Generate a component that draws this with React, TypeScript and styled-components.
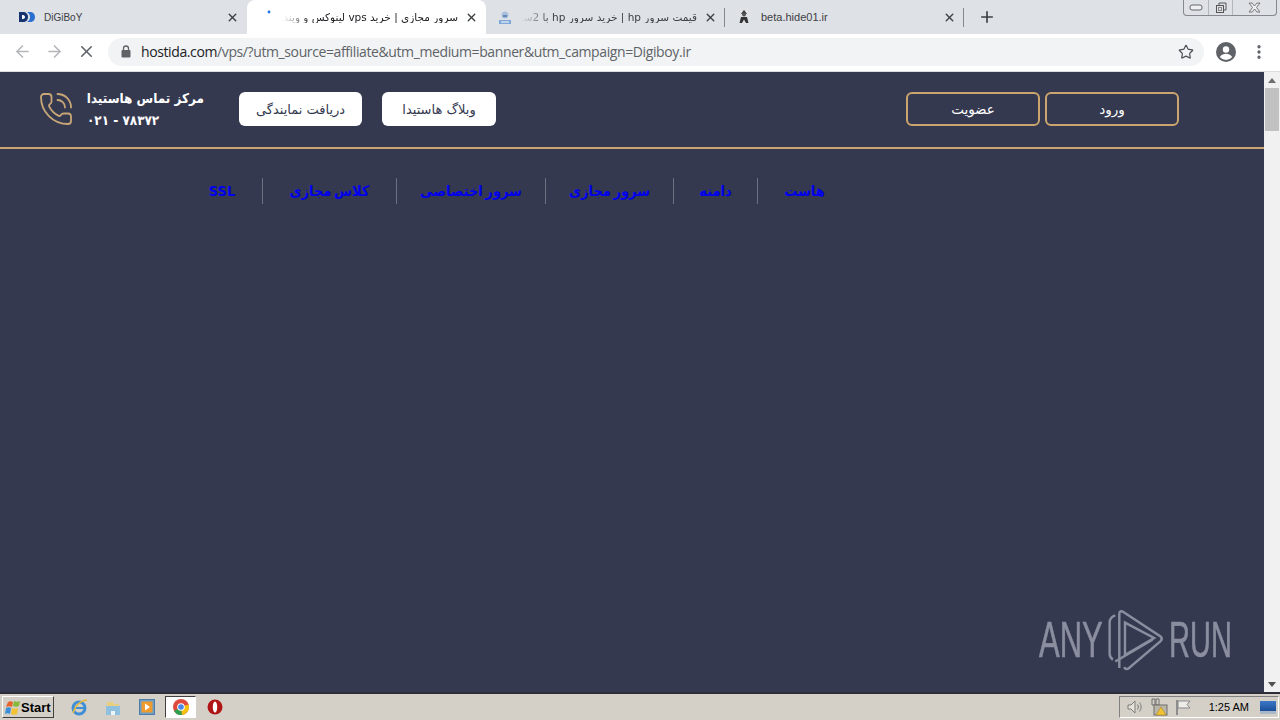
import styled, { createGlobalStyle } from "styled-components";
import { ArrowLeft, ArrowRight, MoreVertical, PhoneCall, Plus, Star, X } from "lucide-react";

const GlobalStyle = createGlobalStyle`
  html, body {
    margin: 0;
    padding: 0;
    overflow: hidden;
  }
  * {
    box-sizing: border-box;
  }
`;

const navItems = [
  { label: "هاست", width: 94 },
  { label: "دامنه", width: 84 },
  { label: "سرور مجازی", width: 128 },
  { label: "سرور اختصاصی", width: 149 },
  { label: "کلاس مجازی", width: 134 },
  { label: "SSL", width: 80 },
];

export default function App() {
  return (
    <StWindow>
      <GlobalStyle />
      <StTabStrip>
        <StTab>
          <StFavicon viewBox="0 0 16 16">
            <path d="M0 3h4c3 0 5 2 5 5s-2 5-5 5H0z" fill="#16346f" />
            <path d="M3 6h1c1 0 2 1 2 2s-1 2-2 2H3z" fill="#ffffff" />
            <path d="M8 3h3c3 0 5 2 5 5s-2 5-5 5H8c2-1 3-3 3-5s-1-4-3-5z" fill="#2a6fd0" />
          </StFavicon>
          <StBrandTitle>DiGiBoY</StBrandTitle>
          <StClose size={13} strokeWidth={2.6} />
        </StTab>
        <StActiveTab>
          <StFavicon viewBox="0 0 16 16">
            <circle cx="11" cy="3" r="1.400" fill="#1a73e8" />
          </StFavicon>
          <StRtlTitle>سرور مجازی | خرید vps لینوکس و ویندوز</StRtlTitle>
          <StClose size={13} strokeWidth={2.6} />
        </StActiveTab>
        <StTab $divider>
          <StFavicon viewBox="0 0 16 16">
            <circle cx="8" cy="6" r="3.500" fill="#a9bfdc" />
            <path d="M6 6h4v2H6z" fill="#5f86b8" />
            <path d="M2 11h12v4H2z" fill="#7fa8d8" />
            <path d="M4 13h8" stroke="#ffffff" />
          </StFavicon>
          <StRtlTitle>قیمت سرور hp | خرید سرور hp با 2سال گارانتی</StRtlTitle>
          <StClose size={13} strokeWidth={2.6} />
        </StTab>
        <StTab $divider>
          <StFavicon viewBox="0 0 16 16">
            <path d="M5 5l3-4 3 4z" fill="#333333" />
            <circle cx="8" cy="5.500" r="2" fill="#555555" />
            <path d="M3.500 14l1.500-6h6l1.500 6h-2.500L8 10.500 6 14z" fill="#333333" />
          </StFavicon>
          <StLtrTitle>beta.hide01.ir</StLtrTitle>
          <StClose size={13} strokeWidth={2.6} />
        </StTab>
        <StNewTab>
          <Plus size={18} strokeWidth={2.2} />
        </StNewTab>
        <StWindowControls>
          <StControl $width={25}>
            <svg width="14" height="7" viewBox="0 0 14 7">
              <rect x="1" y="1" width="12" height="5" rx="2" fill="#eef0f3" stroke="#666" />
            </svg>
          </StControl>
          <StControl $width={24}>
            <svg width="12" height="12" viewBox="0 0 12 12">
              <path d="M4 3V1h7v7H9" fill="none" stroke="#555" />
              <rect x="1.500" y="3.500" width="7" height="7" fill="none" stroke="#555" />
              <rect x="3.500" y="5.500" width="3" height="3" fill="none" stroke="#888" />
            </svg>
          </StControl>
          <StControl $width={43}>
            <svg width="13" height="11" viewBox="0 0 13 11">
              <path d="M1 1h3l2.500 3L9 1h3L8.500 5.500 12 10H9L6.500 7 4 10H1l3.500-4.500z" fill="#eef0f3" stroke="#777" />
            </svg>
          </StControl>
        </StWindowControls>
      </StTabStrip>

      <StToolbar>
        <StNavButton $muted>
          <ArrowLeft size={19} strokeWidth={2} />
        </StNavButton>
        <StNavButton $muted>
          <ArrowRight size={19} strokeWidth={2} />
        </StNavButton>
        <StNavButton>
          <X size={19} strokeWidth={2} />
        </StNavButton>
        <StOmnibox>
          <svg width="10" height="13" viewBox="0 0 10 13">
            <path d="M2.500 5V3.500a2.500 2.500 0 0 1 5 0V5" fill="none" stroke="#5f6368" strokeWidth="1.300" />
            <rect x="0.500" y="5" width="9" height="7.500" rx="1" fill="#5f6368" />
          </svg>
          <StUrl>
            hostida.com<span>/vps/?utm_source=affiliate&amp;utm_medium=banner&amp;utm_campaign=Digiboy.ir</span>
          </StUrl>
          <StStar size={16} strokeWidth={1.8} />
        </StOmnibox>
        <StAvatar viewBox="0 0 20 20">
          <circle cx="10" cy="10" r="10" fill="#5f6368" />
          <circle cx="10" cy="7.500" r="3.200" fill="#fff" />
          <path d="M3.800 15c1.400-2.400 4-3.300 6.200-3.300s4.800.9 6.200 3.300a8 8 0 0 1-12.400 0z" fill="#fff" />
        </StAvatar>
        <StMenuIcon size={18} strokeWidth={2.4} />
      </StToolbar>

      <StViewport>
        <StPage>
          <StHeader>
            <StContact>
              <StPhone size={36} strokeWidth={1.2} />
              <StContactText>
                <strong>مرکز تماس هاستیدا</strong>
                <span>۰۲۱ - ۷۸۳۷۲</span>
              </StContactText>
            </StContact>
            <StWhiteButton $width={123}>دریافت نمایندگی</StWhiteButton>
            <StWhiteButton $width={114}>وبلاگ هاستیدا</StWhiteButton>
            <StAccount>
              <StOutlineButton>عضویت</StOutlineButton>
              <StOutlineButton>ورود</StOutlineButton>
            </StAccount>
          </StHeader>
          <StNav>
            {navItems.map((item, index) => (
              <StNavLink key={item.label} href="#" $width={item.width} $last={index === navItems.length - 1}>
                {item.label}
              </StNavLink>
            ))}
          </StNav>
          <StWatermark>
            <StMarkText $width={63} $scale={0.62}>ANY</StMarkText>
            <svg width="55" height="62" viewBox="0 0 68 75" fill="none" stroke="#8b8e9f" strokeWidth="3">
              <path d="M9 7C3 9 2 12 2 16v38c0 4 1 6 4 8" />
              <path d="M14 72V5c0-3 2-4 5-2l46 30c2 2 2 4 0 6L25 73c-2 1-4 0-5-2" />
              <path d="M21 16v40l36-21z" />
              <path d="M9 64l46-27" />
            </svg>
            <StMarkText $width={61} $scale={0.58}>RUN</StMarkText>
          </StWatermark>
        </StPage>
        <StScrollbar>
          <StArrowUp />
          <StThumb />
          <StArrowDown />
        </StScrollbar>
      </StViewport>

      <StTaskbar>
        <StStart>
          <svg width="16" height="15" viewBox="0 0 16 15">
            <path d="M3 2c2-1 3-1 5 0L7 7C5 6 4 6 1 7z" fill="#e8622a" />
            <path d="M9 1c2 1 4 1 6 0l-1 5c-2 1-4 1-6 0z" fill="#86b93c" />
            <path d="M1 8c2-1 4-1 5 0l-1 6c-2-1-3-1-5 0z" fill="#3a8fd8" />
            <path d="M7 8c2 1 4 1 6 0l-1 6c-2 1-4 1-6 0z" fill="#f2c230" />
          </svg>
          Start
        </StStart>
        <StQuickLaunch>
          <StTaskIcon>
            <svg width="18" height="18" viewBox="0 0 18 18">
              <circle cx="9" cy="10" r="6" fill="none" stroke="#3f8fd6" strokeWidth="3" />
              <path d="M4 10h10" stroke="#3f8fd6" strokeWidth="2" />
              <path d="M3 15C6 6 12 2 17 2" fill="none" stroke="#e5b93c" strokeWidth="1.500" />
            </svg>
          </StTaskIcon>
          <StTaskIcon>
            <svg width="16" height="17" viewBox="0 0 16 17">
              <path d="M2 3h6l1 2h5v4H2z" fill="#e8cf80" />
              <path d="M1 7h14v9H1z" fill="#8fc0de" />
              <path d="M6 16v-4h4v4z" fill="#eef4f8" />
            </svg>
          </StTaskIcon>
          <StTaskIcon>
            <svg width="16" height="16" viewBox="0 0 16 16">
              <rect x="0.500" y="0.500" width="15" height="15" fill="#6f9fc8" stroke="#4c7da8" />
              <rect x="2.500" y="2.500" width="11" height="11" fill="#ef9a2c" />
              <path d="M6 4.500l5 3.500-5 3.500z" fill="#fff" />
            </svg>
          </StTaskIcon>
          <StChromeTask>
            <svg width="16" height="16" viewBox="0 0 16 16">
              <circle cx="8" cy="8" r="8" fill="#de4b3e" />
              <path d="M8 8L1 12a8 8 0 0 0 8 4z" fill="#2f9e4f" />
              <path d="M8 8l7.500-2.500A8 8 0 0 1 9 16z" fill="#f4c20d" />
              <circle cx="8" cy="8" r="3.800" fill="#fff" />
              <circle cx="8" cy="8" r="2.800" fill="#4a86e8" />
            </svg>
          </StChromeTask>
          <StTaskIcon>
            <svg width="16" height="16" viewBox="0 0 16 16">
              <circle cx="8" cy="8" r="7.500" fill="#b01515" />
              <ellipse cx="8" cy="8" rx="2.200" ry="5.500" fill="#fff" />
            </svg>
          </StTaskIcon>
        </StQuickLaunch>
        <StTray>
          <svg width="16" height="16" viewBox="0 0 16 16" fill="none" stroke="#7d7d78">
            <path d="M1 6h3l4-4v12l-4-4H1z" fill="#e6e3dc" />
            <path d="M10.500 5.500a4 4 0 0 1 0 5M12.500 3.500a7 7 0 0 1 0 9" />
          </svg>
          <svg width="18" height="18" viewBox="0 0 18 18">
            <path d="M2 1h3v6H2zM6 1h3v6H6z" fill="none" stroke="#6e6e6a" />
            <rect x="4" y="7" width="13" height="10" fill="#b9b5a9" stroke="#6e6e6a" />
            <path d="M11 9l5 8H6z" fill="#f1c232" stroke="#a37c10" strokeWidth="0.500" />
          </svg>
          <svg width="17" height="17" viewBox="0 0 17 17">
            <path d="M2 1v15" stroke="#77777a" strokeWidth="1.500" />
            <path d="M3 2h12l-3 3.500 3 3.500H3z" fill="#eeece6" stroke="#88888a" />
          </svg>
          <StClock>1:25 AM</StClock>
          <StDesktop />
        </StTray>
      </StTaskbar>
    </StWindow>
  );
}

const StWindow = styled.div`
  display: flex;
  flex-direction: column;
  width: 1280px;
  height: 720px;
  overflow: hidden;
  font-family: "Liberation Sans", Arial, sans-serif;
`;

const StTabStrip = styled.div`
  display: flex;
  align-items: stretch;
  flex: 0 0 34px;
  padding-left: 8px;
  background-color: #dee1e6;
`;

const StTab = styled.div<{ $divider?: boolean }>`
  position: relative;
  display: flex;
  align-items: center;
  gap: 9px;
  width: 239px;
  padding: 0 8px 0 11px;
  color: #3c4043;

  &::after {
    content: "";
    display: ${(props) => (props.$divider ? "block" : "none")};
    position: absolute;
    right: 0;
    top: 8px;
    width: 1px;
    height: 19px;
    background-color: #868a8f;
  }
`;

const StActiveTab = styled(StTab)`
  background-color: #ffffff;
  border-radius: 8px 8px 0 0;
  color: #202124;
`;

const StFavicon = styled.svg`
  flex: 0 0 16px;
  width: 16px;
  height: 16px;
`;

const StLtrTitle = styled.span`
  flex: 1;
  font-size: 11px;
  white-space: nowrap;
  overflow: hidden;
`;

const StBrandTitle = styled(StLtrTitle)`
  font-size: 10px;
`;

const StRtlTitle = styled.span`
  flex: 1;
  margin-right: -2px;
  direction: rtl;
  font-family: "DejaVu Sans", sans-serif;
  font-size: 10.5px;
  white-space: nowrap;
  overflow: hidden;
  mask-image: linear-gradient(to right, transparent 0, #000 28px);
`;

const StClose = styled(X)`
  flex: 0 0 13px;
  color: #3c4043;
`;

const StNewTab = styled.div`
  display: flex;
  align-items: center;
  margin-left: 14px;
  color: #3c4043;
`;

const StWindowControls = styled.div`
  display: flex;
  align-self: flex-start;
  height: 16px;
  margin-left: auto;
  margin-right: 3px;
  border: 1px solid #85888e;
  border-top: none;
  border-radius: 0 0 4px 4px;
`;

const StControl = styled.div<{ $width: number }>`
  display: flex;
  align-items: center;
  justify-content: center;
  width: ${(props) => props.$width}px;
  border-right: 1px solid #b4b7bc;

  &:last-child {
    border-right: none;
  }
`;

const StToolbar = styled.div`
  display: flex;
  align-items: center;
  flex: 0 0 38px;
  padding: 0 12px 2px 6px;
  background-color: #ffffff;
  border-bottom: 1px solid #dadce0;
`;

const StNavButton = styled.div<{ $muted?: boolean }>`
  display: flex;
  align-items: center;
  justify-content: center;
  width: 32px;
  color: ${(props) => (props.$muted ? "#b4b6b9" : "#5f6368")};
`;

const StOmnibox = styled.div`
  display: flex;
  align-items: center;
  width: 1096px;
  height: 28px;
  margin-left: 6px;
  padding: 0 10px 0 13px;
  background-color: #f1f3f4;
  border-radius: 14px;
`;

const StUrl = styled.div`
  flex: 1;
  margin-left: 10px;
  font-family: "Open Sans", sans-serif;
  font-size: 14px;
  letter-spacing: -0.39px;
  color: #202124;
  white-space: nowrap;

  span {
    color: #5f6368;
  }
`;

const StStar = styled(Star)`
  color: #4d5156;
`;

const StAvatar = styled.svg`
  width: 20px;
  height: 20px;
  margin-left: 12px;
`;

const StMenuIcon = styled(MoreVertical)`
  margin-left: 14px;
  color: #5f6368;
`;

const StViewport = styled.div`
  display: flex;
  flex: 1;
  min-height: 0;
`;

const StPage = styled.main`
  position: relative;
  flex: 1;
  background-color: #353950;
`;

const StHeader = styled.header`
  display: flex;
  align-items: center;
  height: 77px;
  padding: 0 85px 1px 40px;
  border-bottom: 2px solid #cba56d;
`;

const StContact = styled.div`
  display: flex;
  align-items: center;
  gap: 13px;
  margin-left: -2px;
  margin-right: 35px;
`;

const StPhone = styled(PhoneCall)`
  color: #c9a676;
`;

const StContactText = styled.div`
  display: flex;
  flex-direction: column;
  gap: 3px;
  width: 117px;
  direction: rtl;
  font-family: "DejaVu Sans Condensed", "DejaVu Sans", sans-serif;
  font-size: 13.400px;
  line-height: 19px;
  font-weight: 700;
  color: #ffffff;
  white-space: nowrap;

  span {
    direction: ltr;
    text-align: left;
  }
`;

const StWhiteButton = styled.button<{ $width: number }>`
  width: ${(props) => props.$width}px;
  height: 34px;
  margin-right: 20px;
  padding: 0;
  direction: rtl;
  background-color: #ffffff;
  border: none;
  border-radius: 6px;
  font-family: "DejaVu Sans", sans-serif;
  font-size: 13px;
  color: #353950;
`;

const StAccount = styled.div`
  display: flex;
  gap: 5px;
  margin-left: auto;
`;

const StOutlineButton = styled.button`
  width: 134px;
  height: 34px;
  padding: 0;
  background-color: transparent;
  border: 2px solid #cba56d;
  border-radius: 6px;
  font-family: "DejaVu Sans", sans-serif;
  font-size: 13.500px;
  color: #ffffff;
`;

const StNav = styled.nav`
  display: flex;
  direction: rtl;
  height: 26px;
  margin-top: 29px;
  padding-right: 413px;
`;

const StNavLink = styled.a<{ $width: number; $last: boolean }>`
  display: flex;
  align-items: center;
  justify-content: center;
  width: ${(props) => props.$width}px;
  border-left: ${(props) => (props.$last ? "none" : "1px solid #6d7080")};
  font-family: "DejaVu Sans Condensed", "DejaVu Sans", sans-serif;
  font-size: 14.500px;
  font-weight: 700;
  word-spacing: -2px;
  color: #0000ee;
  text-decoration: none;
  white-space: nowrap;
`;

const StWatermark = styled.div`
  position: absolute;
  right: 34px;
  bottom: 21px;
  display: flex;
  align-items: center;
  gap: 6px;
  color: #8b8e9f;
`;

const StMarkText = styled.span<{ $width: number; $scale: number }>`
  width: ${(props) => props.$width}px;
  font-family: "Liberation Sans", sans-serif;
  font-size: 50px;
  line-height: 1;
  -webkit-text-stroke: 0.6px #8b8e9f;
  transform: scaleX(${(props) => props.$scale});
  transform-origin: left center;
  white-space: nowrap;
`;

const StScrollbar = styled.div`
  display: flex;
  flex-direction: column;
  align-items: center;
  flex: 0 0 16px;
  background-color: #f1f1f1;
`;

const StArrowUp = styled.div`
  margin-top: 6px;
  border: 4px solid transparent;
  border-top: none;
  border-bottom: 5px solid #6e6e6e;
`;

const StThumb = styled.div`
  align-self: stretch;
  height: 43px;
  margin: 5px 1px 0;
  background-color: #c1c1c1;
`;

const StArrowDown = styled.div`
  margin-top: auto;
  margin-bottom: 5px;
  border: 4px solid transparent;
  border-bottom: none;
  border-top: 5px solid #505050;
`;

const StTaskbar = styled.footer`
  display: flex;
  align-items: center;
  flex: 0 0 28px;
  background-color: #d4d0c8;
  border-top: 2px solid #2b2e3a;
`;

const StStart = styled.div`
  display: flex;
  align-items: center;
  width: 52px;
  height: 22px;
  margin-left: 2px;
  padding-left: 2px;
  background-color: #d4d0c8;
  border: 1px solid;
  border-color: #ffffff #404040 #404040 #ffffff;
  font-size: 13px;
  font-weight: 700;
  color: #000000;
`;

const StQuickLaunch = styled.div`
  display: flex;
  align-items: center;
  margin-left: 8px;
`;

const StTaskIcon = styled.div`
  display: flex;
  align-items: center;
  justify-content: center;
  width: 34px;
  height: 22px;
`;

const StChromeTask = styled(StTaskIcon)`
  width: 31px;
  margin: 0 2px 0 1px;
  background-color: #ffffff;
  border: 1px solid;
  border-color: #404040 #ffffff #ffffff #404040;
`;

const StTray = styled.div`
  display: flex;
  align-items: center;
  gap: 7px;
  height: 22px;
  margin-left: auto;
  margin-right: 1px;
  padding: 0 2px 0 7px;
  border: 1px solid;
  border-color: #808080 #ffffff #ffffff #808080;
`;

const StClock = styled.span`
  margin: 0 4px 0 10px;
  font-size: 11px;
  color: #000000;
`;

const StDesktop = styled.div`
  width: 16px;
  height: 13px;
  background: linear-gradient(#3a78c8, #1d4f9a 75%, #a8b8c8 75%);
`;
